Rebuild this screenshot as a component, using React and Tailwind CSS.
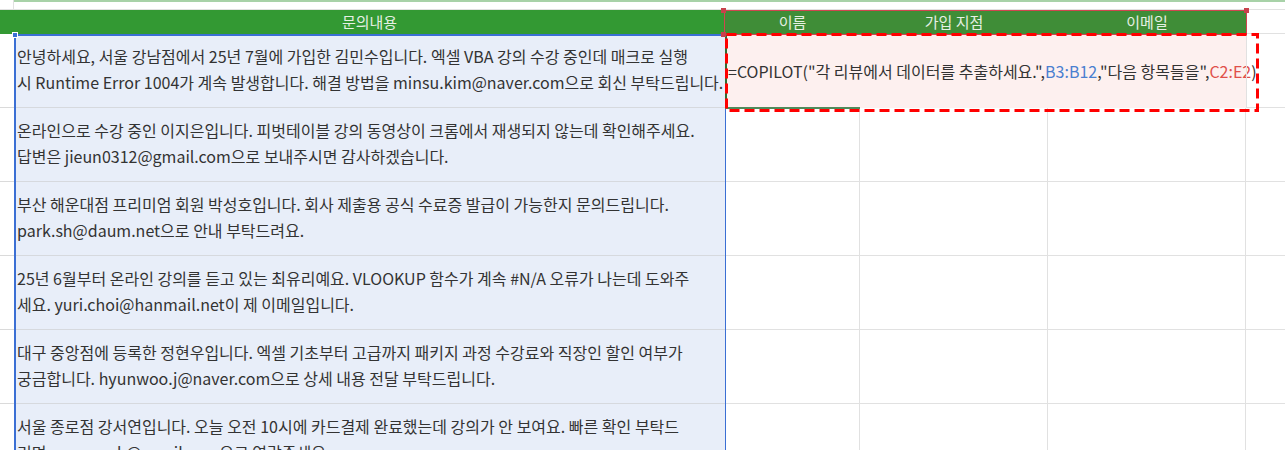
import React from "react";

const rows = [
  [
    "안녕하세요, 서울 강남점에서 25년 7월에 가입한 김민수입니다. 엑셀 VBA 강의 수강 중인데 매크로 실행",
    "시 Runtime Error 1004가 계속 발생합니다. 해결 방법을 minsu.kim@naver.com으로 회신 부탁드립니다.",
  ],
  [
    "온라인으로 수강 중인 이지은입니다. 피벗테이블 강의 동영상이 크롬에서 재생되지 않는데 확인해주세요.",
    "답변은 jieun0312@gmail.com으로 보내주시면 감사하겠습니다.",
  ],
  [
    "부산 해운대점 프리미엄 회원 박성호입니다. 회사 제출용 공식 수료증 발급이 가능한지 문의드립니다.",
    "park.sh@daum.net으로 안내 부탁드려요.",
  ],
  [
    "25년 6월부터 온라인 강의를 듣고 있는 최유리예요. VLOOKUP 함수가 계속 #N/A 오류가 나는데 도와주",
    "세요. yuri.choi@hanmail.net이 제 이메일입니다.",
  ],
  [
    "대구 중앙점에 등록한 정현우입니다. 엑셀 기초부터 고급까지 패키지 과정 수강료와 직장인 할인 여부가",
    "궁금합니다. hyunwoo.j@naver.com으로 상세 내용 전달 부탁드립니다.",
  ],
  [
    "서울 종로점 강서연입니다. 오늘 오전 10시에 카드결제 완료했는데 강의가 안 보여요. 빠른 확인 부탁드",
    "리며 seoyeon.k@gmail.com으로 연락주세요.",
  ],
];

const font = { fontFamily: '"Malgun Gothic","Noto Sans CJK KR","Noto Sans",sans-serif' };
const cols = "grid grid-cols-[14px_711px_135px_188px_198px_1fr]";

export default function App() {
  return (
    <div
      className="relative w-[1285px] h-[450px] overflow-hidden bg-white text-[16px] text-[#333]"
      style={font}
    >
      {/* row 1 */}
      <div className={`${cols} h-[10px] border-b border-[#e1e1e1]`}>
        <div className="border-r border-[#e1e1e1]" />
        <div className="border-t-2 border-[#a8d2a8] col-span-5" />
      </div>

      {/* header row */}
      <div className={`${cols} h-[24px] text-[15px] text-[#e6f0e4] leading-[24px]`}>
        <div className="bg-[#339933]" />
        <div className="bg-[#339933] text-center">문의내용</div>
        <div className="bg-[#3f8d37] text-center">이름</div>
        <div className="bg-[#3f8d37] text-center">가입 지점</div>
        <div className="bg-[#3f8d37] text-center">이메일</div>
        <div className="border-b border-[#e1e1e1]" />
      </div>

      {/* data rows */}
      {rows.map((r, i) => (
        <div key={i} className={`${cols} h-[74px]`}>
          <div className="border-b border-[#dadada]" />
          <div className="bg-[#e8eef9] border-b border-[#d6d9de] flex flex-col justify-center pl-[3px] pb-[4px] leading-[26px] whitespace-nowrap">
            <div>{r[0]}</div>
            <div>{r[1]}</div>
          </div>
          {i === 0 ? (
            <div className="col-span-3 bg-[#fdf0ef] flex items-center pl-[3px] whitespace-nowrap text-[#333]">
              <span>=COPILOT("각 리뷰에서 데이터를 추출하세요.",</span>
              <span className="text-[#4a7fd0]">B3:B12</span>
              <span>,"다음 항목들을",</span>
              <span className="text-[#e0504a]">C2:E2</span>
              <span>)</span>
              <span className="inline-block w-[1px] h-[20px] bg-[#222] ml-[1px]" />
            </div>
          ) : (
            <>
              <div className="border-b border-r border-[#e1e1e1]" />
              <div className="border-b border-r border-[#e1e1e1]" />
              <div className="border-b border-r border-[#e1e1e1]" />
            </>
          )}
          <div className={i === 0 ? "border-b border-[#e1e1e1] border-l" : "border-b border-[#e1e1e1]"} />
        </div>
      ))}

      {/* blue selection border around B3:B... */}
      <div className="absolute left-[14px] top-[34px] w-[712px] h-[430px] border-l-2 border-t-2 border-r border-[#3b6fd4] pointer-events-none" />
      <div className="absolute left-[12px] top-[32px] w-[6px] h-[6px] bg-[#3b6fd4] border border-white" />

      {/* active cell C3 green edges */}
      <div className="absolute left-[725px] top-[34px] w-[2px] h-[75px] bg-[#2e6e35]" />
      <div className="absolute left-[725px] top-[107px] w-[135px] h-[2px] bg-[#4f8a5a]" />

      {/* red range border around C2:E2 */}
      <div className="absolute left-[724px] top-[10px] w-[523px] h-[25px] border border-[#d0454f] pointer-events-none" />
      <div className="absolute left-[721px] top-[8px] w-[5px] h-[5px] bg-[#c8414b]" />
      <div className="absolute left-[1244px] top-[8px] w-[5px] h-[5px] bg-[#c8414b]" />
      <div className="absolute left-[721px] top-[32px] w-[5px] h-[5px] bg-[#c8414b]" />

      {/* red dashed box */}
      <svg className="absolute left-[725px] top-[33px]" width="536" height="80">
        <rect
          x="1.5"
          y="1.5"
          width="531"
          height="76"
          fill="none"
          stroke="#ff0000"
          strokeWidth="3"
          strokeDasharray="10 5"
        />
      </svg>
    </div>
  );
}
